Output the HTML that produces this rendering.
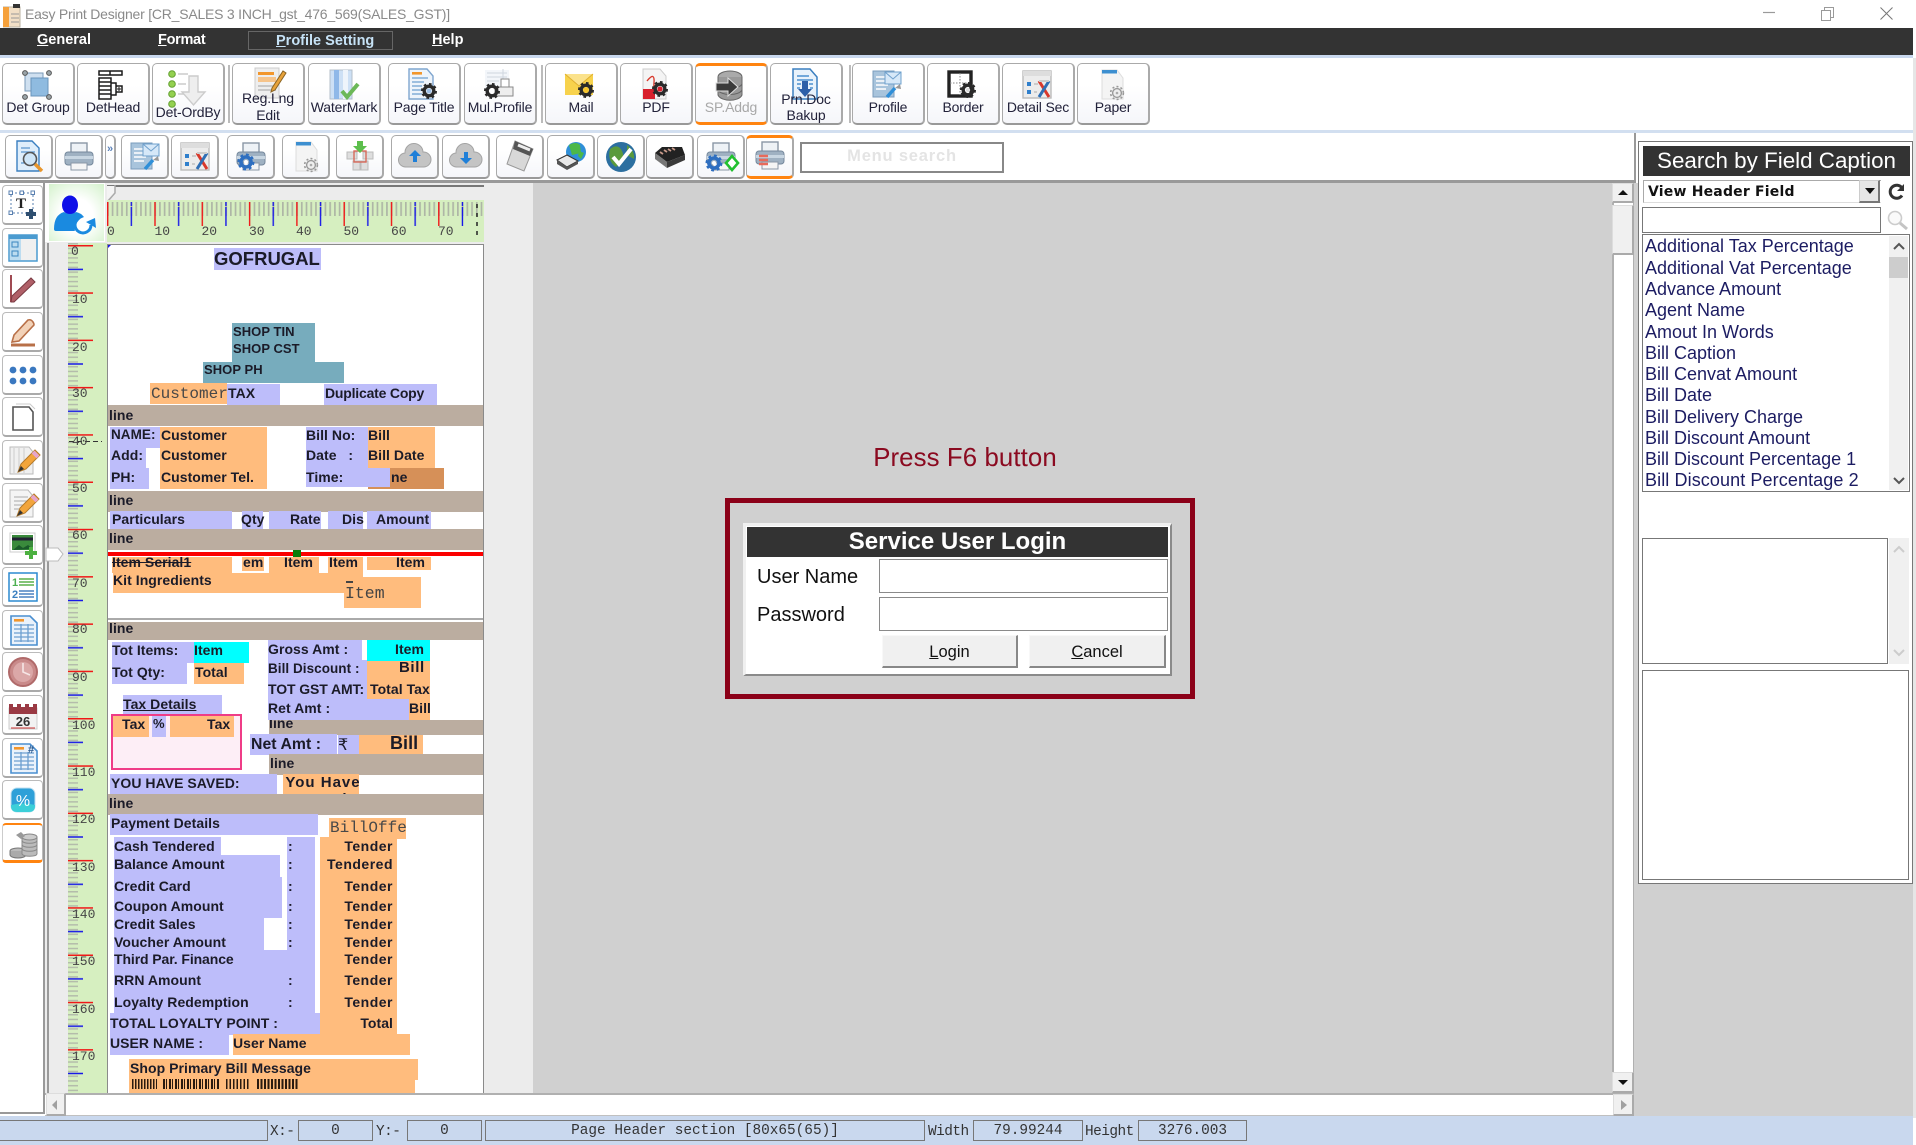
<!DOCTYPE html>
<html><head><meta charset="utf-8"><title>Easy Print Designer</title>
<style>
html,body{margin:0;padding:0;background:#fff}
#r{position:relative;width:1916px;height:1145px;overflow:hidden;background:#fff;font-family:"Liberation Sans",sans-serif;color:#1d1d28;filter:blur(.35px)}
.a{position:absolute;display:block;box-sizing:border-box}
.m{position:absolute;top:31px;color:#fff;font:bold 14.5px/18px "Liberation Sans",sans-serif;white-space:nowrap}
.m u{text-decoration:underline}
.b,.c{position:absolute;box-sizing:border-box;border:1px solid #aaa;border-bottom:2px solid #999;border-right:2px solid #aaa;border-radius:5px;background:linear-gradient(#fff 35%,#f5f6fa)}
.b{top:63px;height:62px;width:73px}
.c{top:135px;height:44px;width:48px}
.or{border-top:3px solid #ff8410;border-bottom:3px solid #ff8410}
.b span{position:absolute;left:-6px;right:-6px;text-align:center;font:14px/16px "Liberation Sans",sans-serif;letter-spacing:-.15px;color:#22223a;top:35px;white-space:nowrap}
.b svg{position:absolute;left:18px;top:5px;overflow:visible}
.c svg{position:absolute;left:7px;top:5px;overflow:visible}
.lb{position:absolute;left:2px;width:41px;height:40px;box-sizing:border-box;border:1px solid #bbb;border-bottom:2px solid #aaa;border-radius:4px;background:#fff}
.lb svg{position:absolute;left:5px;top:4px;overflow:visible}
.l{position:absolute;background:#bdbdfa}
.o{position:absolute;background:#ffbc7d}
.g{position:absolute;background:#bbada0;left:108px;width:375px;height:21px}
.d{position:absolute;font:bold 14px/16px "Liberation Sans",sans-serif;letter-spacing:.05px;white-space:nowrap;color:#1b1b28}
.tn{letter-spacing:.5px}
.mo{position:absolute;font:16px/18px "Liberation Mono",monospace;white-space:nowrap;color:#484848}
.li{position:absolute;left:1645px;font:18px/21px "Liberation Sans",sans-serif;color:#1c1c62;white-space:nowrap}
.st{position:absolute;top:1120px;height:21px;box-sizing:border-box;border:1.5px solid #777;font:14.4px/20px "Liberation Mono",monospace;text-align:center;color:#333;white-space:nowrap}
.sl{position:absolute;top:1122px;font:14.4px/20px "Liberation Mono",monospace;color:#333;white-space:nowrap;letter-spacing:-.5px}
.sb{position:absolute;background:#f0f0f0;box-sizing:border-box;border:1px solid #ddd;border-right:2px solid #aaa;border-bottom:2px solid #aaa}
</style></head><body><div id="r">

<svg width="0" height="0" style="position:absolute">
<defs>
<g id="ge"><circle r="4.8" fill="none" stroke="#2a2a2a" stroke-width="3.4"/><circle r="6.8" fill="none" stroke="#2a2a2a" stroke-width="2.4" stroke-dasharray="2.6 2.7"/></g>
<g id="gel"><circle r="4.4" fill="#eee" stroke="#999" stroke-width="1.4"/><circle r="6.4" fill="none" stroke="#999" stroke-width="1.6" stroke-dasharray="2 2.2"/><circle r="1.3" fill="#aaa"/></g>
<g id="gb"><circle r="5" fill="none" stroke="#2f6fc0" stroke-width="3.6"/><circle r="7.2" fill="none" stroke="#2f6fc0" stroke-width="2.6" stroke-dasharray="2.8 2.8"/></g>
<g id="i-prof"><rect x="2" y="2" width="21" height="26" fill="#a8c4dc" stroke="#7a9cbc"/><path d="M5 8h14M5 12h14M5 16h12M5 20h10" stroke="#fff" stroke-width="1.6"/><rect x="14" y="3" width="16" height="12" fill="#d6e8f8" stroke="#6fa0cc"/><path d="M14 3l8 7 8-7" fill="none" stroke="#6fa0cc"/><path d="M16 28l8-9" stroke="#2f8fd8" stroke-width="3.4"/><path d="M24 19l5-4 1 5z" fill="#999"/></g>
<g id="i-det"><rect x="2" y="2" width="28" height="27" fill="#ececec" stroke="#bbb" stroke-width="1.4"/><rect x="2" y="2" width="28" height="5" fill="#ddd"/><rect x="6" y="13" width="4" height="4" fill="#2f7fcc"/><rect x="6" y="21" width="4" height="4" fill="#2f7fcc"/><path d="M13 15h4M13 23h3" stroke="#aaa"/><path d="M18 12l10 16" stroke="#d8392c" stroke-width="3"/><path d="M28 12l-10 16" stroke="#2f6fb5" stroke-width="3"/><path d="M18 12h10" stroke="#ccc" stroke-width="2"/></g>
<g id="i-pap"><path d="M6 1h15l6 8v21H6z" fill="#f4f4f4" stroke="#ddd"/><rect x="6" y="1" width="15" height="3.5" fill="#3d8fd0"/><use href="#gel" x="21" y="24"/></g>
<g id="i-prn"><rect x="8" y="2" width="16" height="10" fill="#eef2f6" stroke="#8a97a6" stroke-width="1.4"/><rect x="2" y="11" width="28" height="13" rx="3" fill="#9fb1c2" stroke="#75889c"/><rect x="2" y="15" width="28" height="3" fill="#c8d6e2"/><rect x="8" y="22" width="16" height="7" fill="#f5f5f5" stroke="#8a97a6"/></g>
<g id="i-pen"><path d="M7 25l3-8 14-14 5 5-14 14z" fill="#f2a53c" stroke="#b57a2a"/><path d="M22 5l5 5" stroke="#e5a5cc" stroke-width="4"/><path d="M7 25l3-6 3 3z" fill="#333"/></g>
<g id="i-tbl"><path d="M3 1h19l7 7v22H3z" fill="#eaf2fb" stroke="#4a8fd0" stroke-width="1.6"/><rect x="6" y="4" width="10" height="2.6" fill="#f2962c"/><path d="M6 10h20M6 14h20M6 18h20M6 22h20M6 26h20M13 9v18M20 9v18" stroke="#6d9fd0" stroke-width="1.3"/></g>
</defs></svg>

<!-- title bar -->
<svg class="a" style="left:3px;top:4px" width="18" height="24" viewBox="0 0 18 24"><rect x="0" y="3" width="17" height="20" fill="#f2dfc5" stroke="#b8b0a0"/><rect x="0" y="3" width="6" height="20" fill="#f6a13b"/><rect x="10" y="0" width="7" height="4" fill="#333"/><path d="M8 10h8M8 14h8M8 18h8" stroke="#999"/></svg>
<div class="a" style="left:25px;top:5px;font:14px/19px 'Liberation Sans',sans-serif;color:#8a8a8a;white-space:nowrap;letter-spacing:-.22px">Easy Print Designer [CR_SALES 3 INCH_gst_476_569(SALES_GST)]</div>
<svg class="a" style="left:1760px;top:4px" width="140" height="22"><path d="M3 8.5h12" stroke="#9a9a9a" stroke-width="1.2"/><path d="M61.500 6.500h9v10h-9zM64.500 6.500v-3h9v10h-3" fill="none" stroke="#9a9a9a"/><path d="M120.500 3.500l12 12M132.500 3.500l-12 12" stroke="#777"/></svg>

<!-- menu -->
<div class="a" style="left:0;top:28px;width:1913px;height:27px;background:#333"></div>
<div class="a" style="left:0;top:55px;width:1913px;height:3px;background:#c9d8ee"></div>
<div class="a" style="left:248px;top:31px;width:145px;height:19px;border:1.5px solid #666"></div>
<div class="m" style="left:37px"><u>G</u>eneral</div>
<div class="m" style="left:158px;letter-spacing:-.3px"><u>F</u>ormat</div>
<div class="m" style="left:276px;top:32px;color:#c6e2f6"><u>P</u>rofile Setting</div>
<div class="m" style="left:432px"><u>H</u>elp</div>
<div class="a" style="left:1913px;top:58px;width:3px;height:1060px;background:#e6e6e6"></div>

<!-- toolbar 1 -->
<div class="b" style="left:2px"><svg width="32" height="32" viewBox="0 0 32 32"><rect x="4" y="4" width="18" height="18" fill="#cfe0f0" stroke="#7a9ab8"/><rect x="10" y="9" width="17" height="18" fill="#8fbbe0" stroke="#6a94bb"/><g fill="#9aa4a8" stroke="#555"><circle cx="4" cy="4" r="2.4"/><circle cx="28" cy="4" r="2.4"/><circle cx="4" cy="28" r="2.4"/><circle cx="28" cy="28" r="2.4"/></g></svg><span>Det Group</span></div>
<div class="b" style="left:77px"><svg width="32" height="32" viewBox="0 0 32 32" fill="none" stroke="#1a1a1a" stroke-width="1.5"><path d="M3 2h23v4H3zM14 2v4M3 9h12v21H3zM3 13h12M3 17h12M3 21h12M3 25h12M15 14h5v12h-5M20 17h6v6h-6z"/><path d="M21 20h4M23 18v4" stroke-width="1"/></svg><span>DetHead</span></div>
<div class="b" style="left:152px"><svg style="left:15px;top:6px" width="40" height="38" viewBox="0 0 40 38"><g fill="#93d050" stroke="#63a030"><circle cx="4" cy="4" r="3.3"/><circle cx="4" cy="14" r="3.3"/><circle cx="4" cy="24" r="3.3"/><circle cx="4" cy="34" r="3.3"/></g><path d="M10 4h10M10 14h8M10 24h6" stroke="#ccc" stroke-width="1.5"/><path d="M21 6h9v16h7L25.500 35 14 22h7z" fill="#eee" stroke="#ccc" stroke-width="1.4"/></svg><span style="top:40px">Det-OrdBy</span></div>
<div class="a" style="left:228px;top:65px;width:2px;height:58px;background:#bbb"></div>
<div class="b" style="left:232px"><svg style="left:20px;top:3px" width="34" height="32" viewBox="0 0 34 32"><rect x="2" y="1" width="24" height="30" fill="#eee" stroke="#ccc"/><rect x="5" y="5" width="16" height="3" fill="#f2962c"/><rect x="5" y="10" width="18" height="5" fill="#f6c48b"/><path d="M5 19h18M5 23h18" stroke="#bbb" stroke-width="1.5"/><path d="M19 21L30 4l3 2-11 17-4 2z" fill="#e8a23a" stroke="#8a6424"/></svg><span style="top:26px">Reg.Lng</span><span style="top:43px">Edit</span></div>
<div class="b" style="left:308px"><svg width="32" height="32" viewBox="0 0 32 32"><rect x="3" y="1" width="22" height="29" fill="#cde0f5" stroke="#b4bfca"/><rect x="7" y="1" width="5" height="29" fill="#8fb8e8"/><rect x="16" y="1" width="5" height="29" fill="#eef4fb"/><path d="M15 22l5 6 11-13" fill="none" stroke="#6cb858" stroke-width="4"/></svg><span>WaterMark</span></div>
<div class="b" style="left:388px"><svg width="32" height="32" viewBox="0 0 32 32"><path d="M2 0h18l6 7v23H2z" fill="#eef4fb" stroke="#7fa6cf" stroke-width="1.4"/><rect x="5" y="3" width="10" height="2.600" fill="#f2962c"/><path d="M5 9h16M5 13h12M5 17h10M5 21h10M5 25h10" stroke="#6d9fd0" stroke-width="1.3"/><use href="#ge" x="22" y="22"/><circle cx="22" cy="22" r="2.500" fill="#9fc0e6"/></svg><span>Page Title</span></div>
<div class="b" style="left:464px"><svg width="32" height="32" viewBox="0 0 32 32"><path d="M2 1h24v18H2z" fill="#f3f6fa"/><path d="M4 4h20M4 8h20M4 12h12M4 16h8M20 0v18" stroke="#cfd6df"/><rect x="12" y="18" width="18" height="9" fill="#eee" stroke="#888"/><rect x="18" y="10" width="8" height="8" fill="#fff" stroke="#888"/><use href="#ge" x="9" y="22"/><circle cx="9" cy="22" r="2" fill="#fff"/></svg><span>Mul.Profile</span></div>
<div class="a" style="left:541px;top:65px;width:2px;height:58px;background:#bbb"></div>
<div class="b" style="left:545px"><svg width="32" height="32" viewBox="0 0 32 32"><rect x="1" y="5" width="28" height="21" fill="#f7d24c"/><path d="M1 5l14 12L29 5" fill="#fbe28b" stroke="#e0b030"/><use href="#ge" x="22" y="21"/><circle cx="22" cy="21" r="2.600" fill="#f7c52c"/></svg><span>Mail</span></div>
<div class="b" style="left:620px"><svg width="32" height="32" viewBox="0 0 32 32"><path d="M4 0h17l6 7v23H4z" fill="#f4f4f4" stroke="#ccc"/><path d="M8 12q8-10 7 2t7 6" fill="none" stroke="#d8392c" stroke-width="1.4"/><rect x="4" y="20" width="12" height="10" fill="#d8202c"/><use href="#ge" x="21" y="20"/><circle cx="21" cy="20" r="2.600" fill="#d8202c"/></svg><span>PDF</span></div>
<div class="b or" style="left:695px"><svg style="top:3px" width="32" height="32" viewBox="0 0 32 32"><ellipse cx="16" cy="8" rx="12" ry="6" fill="#aaa" stroke="#666"/><path d="M4 8v18c3 7 21 7 24 0V8" fill="#999" stroke="#666"/><path d="M4 15c3 6 21 6 24 0M4 21c3 6 21 6 24 0" fill="none" stroke="#666"/><path d="M2 14h12V9l10 9-10 9v-5H2z" fill="#3a3a3a" stroke="#ddd"/></svg><span style="top:33px;color:#a8a8a8">SP.Addg</span></div>
<div class="b" style="left:770px"><svg width="32" height="32" viewBox="0 0 32 32"><path d="M4 0h17l7 8v22H4z" fill="#e8f2fb" stroke="#3a7fc0" stroke-width="1.5"/><path d="M8 7h12M8 11h16M8 15h4M20 15h4M8 19h3M21 19h3" stroke="#4a8fd0" stroke-width="1.400"/><path d="M13 12h6v8h4l-7 8-7-8h4z" fill="#2c5fa8"/></svg><span style="top:27px">Prn.Doc</span><span style="top:43px">Bakup</span></div>
<div class="a" style="left:849px;top:65px;width:2px;height:58px;background:#bbb"></div>
<div class="b" style="left:852px"><svg width="32" height="32" viewBox="0 0 32 32"><use href="#i-prof"/></svg><span>Profile</span></div>
<div class="b" style="left:927px"><svg width="32" height="32" viewBox="0 0 32 32"><rect x="3" y="3" width="22" height="24" fill="#fff" stroke="#222" stroke-width="3.400"/><path d="M14 4v22M4 14h20" stroke="#888" stroke-dasharray="1.500 1.500"/><use href="#ge" x="22" y="21"/><circle cx="22" cy="21" r="2.200" fill="#ddd"/></svg><span>Border</span></div>
<div class="b" style="left:1002px"><svg width="32" height="32" viewBox="0 0 32 32"><use href="#i-det"/></svg><span>Detail Sec</span></div>
<div class="b" style="left:1077px"><svg width="32" height="32" viewBox="0 0 32 32"><use href="#i-pap"/></svg><span>Paper</span></div>
<div class="a" style="left:0;top:130px;width:1913px;height:3px;background:#d2dff0"></div>

<!-- toolbar 2 -->
<div class="a" style="left:0;top:133px;width:1636px;height:48px;background:#fff;border-right:2px solid #999"></div>
<div class="c" style="left:5px"><svg width="32" height="32" viewBox="0 0 32 32"><path d="M4 0h15l7 7v23H4z" fill="#dfeefb" stroke="#3a7fc0" stroke-width="1.400"/><path d="M8 7h9M8 11h14M8 22h6" stroke="#3a7fc0"/><circle cx="17" cy="18" r="6.500" fill="#cfe6f8" stroke="#555" stroke-width="1.600"/><path d="M22 23l7 7" stroke="#e8962c" stroke-width="3.400"/></svg></div>
<div class="c" style="left:55px"><svg width="32" height="32" viewBox="0 0 32 32"><use href="#i-prn"/></svg></div>
<div class="c" style="left:105px;width:11px"><span style="position:absolute;left:1px;top:7px;font:bold 11px/12px 'Liberation Sans',sans-serif;color:#5a80b8">»</span></div>
<div class="c" style="left:121px"><svg width="32" height="32" viewBox="0 0 32 32"><use href="#i-prof"/></svg></div>
<div class="c" style="left:171px"><svg width="32" height="32" viewBox="0 0 32 32"><use href="#i-det"/></svg></div>
<div class="c" style="left:227px"><svg width="32" height="32" viewBox="0 0 32 32"><use href="#i-prn"/><use href="#gb" x="11" y="21"/><circle cx="11" cy="21" r="2" fill="#fff"/></svg></div>
<div class="c" style="left:282px"><svg width="32" height="32" viewBox="0 0 32 32"><use href="#i-pap"/></svg></div>
<div class="c" style="left:336px"><svg width="32" height="32" viewBox="0 0 32 32"><path d="M3 11h10v7H3zM19 11h10v7H19zM9 20h7v9H9zM17 20h7v9H17z" fill="#dedede" stroke="#bbb"/><rect x="10" y="10" width="12" height="11" fill="none" stroke="#d86a5a" stroke-width="1.400"/><path d="M13 0h6v5h4l-7 7-7-7h4z" fill="#5cbf4c"/></svg></div>
<div class="c" style="left:391px"><svg width="32" height="32" viewBox="0 0 32 32"><path d="M7 26a7 7 0 0 1-1-14 9 9 0 0 1 18-1 7.500 7.500 0 0 1 1 15z" fill="#c4c4c4" stroke="#a4a4a4"/><path d="M16 9l6 6h-4v6h-4v-6h-4z" fill="#1f7fd8"/></svg></div>
<div class="c" style="left:442px"><svg width="32" height="32" viewBox="0 0 32 32"><path d="M7 26a7 7 0 0 1-1-14 9 9 0 0 1 18-1 7.500 7.500 0 0 1 1 15z" fill="#c4c4c4" stroke="#a4a4a4"/><path d="M16 23l6-6h-4v-6h-4v6h-4z" fill="#1f7fd8"/></svg></div>
<div class="c" style="left:496px"><svg width="32" height="32" viewBox="0 0 32 32"><path d="M11 0l18 8-9 22-17-7z" fill="#d8d8d8" stroke="#999"/><path d="M11 0l18 8-3 7-17-7z" fill="#555"/><path d="M14 4l12 5" stroke="#eee" stroke-width="3"/></svg></div>
<div class="c" style="left:547px"><svg width="32" height="32" viewBox="0 0 32 32"><circle cx="21" cy="11" r="10" fill="#2f8fd8"/><path d="M14 4q7-4 11 0l1 8-9 2z" fill="#4cb848"/><path d="M24 10l5 2-3 6-3-3z" fill="#4cb848"/><path d="M2 19l10-5 11 6-11 6z" fill="#e8e8e8" stroke="#333"/><path d="M2 19v4l10 6 11-6v-3l-11 6z" fill="#555"/></svg></div>
<div class="c" style="left:597px"><svg width="32" height="32" viewBox="0 0 32 32"><circle cx="16" cy="16" r="15" fill="#2c6fa0"/><path d="M5 8q8-6 12 2t-6 16Q2 20 5 8zM22 4q8 6 7 14l-7-4z" fill="#5a9a3c"/><path d="M8 16l6 7L26 8" fill="none" stroke="#fff" stroke-width="4"/></svg></div>
<div class="c" style="left:646px"><svg width="32" height="32" viewBox="0 0 32 32"><path d="M8 6h20l3 8-18 7L1 12z" fill="#222"/><path d="M1 12l12 9v6L1 18z" fill="#777"/><path d="M13 21l18-7v5l-18 8z" fill="#3a3a3a"/><path d="M6 11l3 2M10 9l3 2M14 8l3 2M18 7l3 2" stroke="#c89a8a" stroke-width="1.800"/></svg></div>
<div class="c" style="left:697px"><svg width="32" height="32" viewBox="0 0 32 32"><use href="#i-prn"/><use href="#gb" x="9" y="22"/><circle cx="9" cy="22" r="2" fill="#fff"/><path d="M27 15l6 7-6 7-6-7z" fill="#fff" stroke="#22c030" stroke-width="2.600"/></svg></div>
<div class="c or" style="left:746px"><svg style="top:2px" width="32" height="32" viewBox="0 0 32 32"><use href="#i-prn"/><path d="M5 16h9M5 20h9M5 24h9" stroke="#e86a5a" stroke-width="2.600"/></svg></div>
<div class="a" style="left:800px;top:142px;width:204px;height:31px;border:2px solid #888;border-bottom-color:#888;background:#fff;text-align:center;font:bold 16.500px/25px 'Liberation Sans',sans-serif;color:#e4e4e4;letter-spacing:.8px">Menu search</div>
<div class="a" style="left:0;top:180px;width:1636px;height:3px;background:#999"></div>

<!-- gray workspace -->
<div class="a" style="left:1634px;top:183px;width:279px;height:934px;background:#d0d0d0"></div>
<div class="a" style="left:533px;top:183px;width:1080px;height:910px;background:#d0d0d0"></div>
<div class="a" style="left:484px;top:183px;width:49px;height:910px;background:#ececec"></div>
<div class="a" style="left:45px;top:183px;width:439px;height:62px;background:#ececec"></div>
<div class="a" style="left:45px;top:243px;width:23px;height:850px;background:#ececec"></div>
<div class="a" style="left:47px;top:243px;width:2px;height:850px;background:#9a9a9a"></div>
<svg class="a" style="left:45px;top:546px" width="20" height="18"><path d="M1 2h12l5 6-5 7H1z" fill="#fff" stroke="#bbb"/></svg>

<!-- right of workspace scrollbar -->
<div class="a" style="left:1612px;top:183px;width:22px;height:910px;background:#fff;border-left:2px solid #b0b0b0;border-right:1px solid #b0b0b0"></div>
<div class="sb" style="left:1612px;top:183px;width:22px;height:20px"></div>
<svg class="a" style="left:1616px;top:189px" width="14" height="8"><path d="M7 1l5 5H2z" fill="#111"/></svg>
<div class="sb" style="left:1612px;top:205px;width:22px;height:50px"></div>
<div class="sb" style="left:1612px;top:1072px;width:22px;height:21px"></div>
<svg class="a" style="left:1616px;top:1078px" width="14" height="8"><path d="M7 7l5-5H2z" fill="#111"/></svg>

<!-- horizontal scrollbar -->
<div class="a" style="left:45px;top:1093px;width:1589px;height:24px;background:#fff;border-top:2px solid #b0b0b0;border-bottom:2px solid #c0c0c0"></div>
<div class="sb" style="left:46px;top:1093px;width:20px;height:23px"></div>
<svg class="a" style="left:50px;top:1099px" width="10" height="12"><path d="M7 1v10L2 6z" fill="#a0a0a0"/></svg>
<div class="sb" style="left:1613px;top:1094px;width:21px;height:22px"></div>
<svg class="a" style="left:1619px;top:1099px" width="10" height="12"><path d="M2 1v10l6-5z" fill="#a0a0a0"/></svg>

<!-- left toolbar -->
<div class="a" style="left:0;top:183px;width:45px;height:931px;background:#fff;border-right:2px solid #999;border-bottom:2px solid #999"></div>
<div class="lb" style="top:185px;height:40px"><svg width="30" height="30" viewBox="0 0 30 30"><rect x="3" y="3" width="22" height="20" fill="none" stroke="#5a80b0" stroke-dasharray="2 2"/><g fill="#fff" stroke="#5a80b0"><rect x="1" y="1" width="3.500" height="3.500"/><rect x="23" y="1" width="3.500" height="3.500"/><rect x="1" y="21" width="3.500" height="3.500"/><rect x="12" y="1" width="3.500" height="3.500"/></g><text x="8" y="18" font-family="Liberation Serif,serif" font-weight="bold" font-size="15" fill="#222">T</text><path d="M23 19v10M18 24h10" stroke="#2f4f70" stroke-width="4"/></svg></div>
<div class="lb" style="top:228px"><svg width="30" height="30" viewBox="0 0 30 30"><rect x="1" y="2" width="28" height="26" fill="#f0f0f0" stroke="#4a9bd0" stroke-width="1.500"/><rect x="1" y="2" width="28" height="4" fill="#4a9bd0"/><rect x="2" y="6" width="11" height="21" fill="#bcdcf0"/><rect x="4" y="9" width="6" height="5" fill="none" stroke="#3a86c0"/><rect x="4" y="18" width="6" height="5" fill="none" stroke="#3a86c0"/></svg></div>
<div class="lb" style="top:269px"><svg width="30" height="30" viewBox="0 0 30 30"><path d="M3 1v27" stroke="#a04a52" stroke-width="2"/><path d="M3 28h3L27 8l-4-4L4 22z" fill="#b06068" stroke="#7a3a42"/></svg></div>
<div class="lb" style="top:312px"><svg width="30" height="30" viewBox="0 0 30 30"><path d="M3 28h24" stroke="#b87048" stroke-width="3"/><path d="M4 25l2-7L20 3q3-1 5 2t0 4L11 24z" fill="#f2d2b8" stroke="#b87048" stroke-width="1.600"/></svg></div>
<div class="lb" style="top:355px"><svg width="30" height="30" viewBox="0 0 30 30" fill="#3a78c0"><circle cx="5" cy="10" r="3.400"/><circle cx="15" cy="10" r="3.400"/><circle cx="25" cy="10" r="3.400"/><circle cx="5" cy="21" r="3.400"/><circle cx="15" cy="21" r="3.400"/><circle cx="25" cy="21" r="3.400"/></svg></div>
<div class="lb" style="top:397px"><svg width="30" height="30" viewBox="0 0 30 30"><path d="M5 5h16l4 5v18H5z" fill="#fff" stroke="#555" stroke-width="1.600"/><path d="M8 2h14l5 5" fill="none" stroke="#ccc"/></svg></div>
<div class="lb" style="top:440px"><svg width="30" height="30" viewBox="0 0 30 30"><path d="M2 2h19l4 5v22H2z" fill="#f0f0f0" stroke="#bbb"/><path d="M6 3v25M11 3v25M16 3v25" stroke="#ccc"/><use href="#i-pen" x="3" y="2"/></svg></div>
<div class="lb" style="top:483px"><svg width="30" height="30" viewBox="0 0 30 30"><path d="M2 2h18l5 6v21H2z" fill="#f4f4f4" stroke="#bbb"/><path d="M6 9h14M6 13h14M6 17h10M6 21h8" stroke="#aaa"/><use href="#i-pen" x="2" y="3"/></svg></div>
<div class="lb" style="top:525px"><svg width="30" height="30" viewBox="0 0 30 30"><rect x="2" y="3" width="25" height="19" fill="#fff" stroke="#ccc"/><rect x="4" y="5" width="21" height="15" fill="#3a8a3c"/><path d="M4 9h21" stroke="#223" stroke-width="3"/><path d="M5 20l6-5 4 3 5-3 5 4" fill="#1a5a2a"/><path d="M23 17v12M17 23h12" stroke="#4cb040" stroke-width="4"/></svg></div>
<div class="lb" style="top:567px"><svg width="30" height="30" viewBox="0 0 30 30"><rect x="1" y="1" width="28" height="28" fill="#fff" stroke="#2c8ad0" stroke-width="1.500"/><text x="4" y="14" font-family="Liberation Sans,sans-serif" font-size="11" font-weight="bold" fill="#4caf50">1</text><text x="4" y="26" font-family="Liberation Sans,sans-serif" font-size="11" font-weight="bold" fill="#3a7fc0">2</text><path d="M11 7h15M11 10h15M11 13h15" stroke="#5ab04a" stroke-width="1.500"/><path d="M11 19h15M11 22h15M11 25h15" stroke="#4a80c0" stroke-width="1.500"/></svg></div>
<div class="lb" style="top:610px"><svg width="30" height="30" viewBox="0 0 30 30"><use href="#i-tbl"/></svg></div>
<div class="lb" style="top:652px"><svg width="30" height="30" viewBox="0 0 30 30"><circle cx="15" cy="15" r="14" fill="#c98a8a" stroke="#b06a6a" stroke-width="2"/><circle cx="15" cy="15" r="10" fill="#dba8a8"/><path d="M15 6v9l7 3" fill="none" stroke="#f6e6e6" stroke-width="1.600"/></svg></div>
<div class="lb" style="top:695px"><svg width="30" height="30" viewBox="0 0 30 30"><rect x="1" y="8" width="28" height="21" fill="#f2f2f2" stroke="#ccc"/><path d="M1 14V4h4v3h4V4h4v3h4V4h4v3h4V4h4v10z" fill="#9a3a44"/><text x="15" y="26" text-anchor="middle" font-family="Liberation Sans,sans-serif" font-size="13" font-weight="bold" fill="#333">26</text><path d="M3 28h24" stroke="#c33" stroke-width="1"/></svg></div>
<div class="lb" style="top:738px"><svg width="30" height="30" viewBox="0 0 30 30"><use href="#i-tbl"/><text x="20" y="10" font-family="Liberation Sans,sans-serif" font-size="11" font-weight="bold" fill="#2c5a90">#</text></svg></div>
<div class="lb" style="top:780px"><svg width="30" height="30" viewBox="0 0 30 30"><rect x="3" y="3" width="24" height="24" rx="6" fill="#2ea0d8" stroke="#c0dff0"/><path d="M3 20q12-3 24 0v1q0 6-6 6H9q-6 0-6-6z" fill="#3ccfd8"/><text x="15" y="21" text-anchor="middle" font-family="Liberation Sans,sans-serif" font-size="16" fill="#fff">%</text></svg></div>
<div class="lb" style="top:823px;border-bottom:3px solid #ff8410;border-top:2px solid #ff8410;border-left-color:#ccc"><svg width="30" height="30" viewBox="0 0 30 30"><ellipse cx="10" cy="22" rx="8" ry="3" fill="#bbb" stroke="#777"/><path d="M2 22v4c1 4 15 4 16 0v-4" fill="#aaa" stroke="#777"/><path d="M14 8v17c2 3 14 3 15 0V8z" fill="#bbb" stroke="#888"/><path d="M14 12c2 3 13 3 15 0M14 16c2 3 13 3 15 0M14 20c2 3 13 3 15 0" fill="none" stroke="#888"/><ellipse cx="21.500" cy="8" rx="7.500" ry="3" fill="#ccc" stroke="#888"/><path d="M8 6l5-3 4 4-4 3z" fill="#999"/></svg></div>

<!-- user icon box -->
<div class="a" style="left:45px;top:183px;width:60px;height:59px;background:#fff"></div>
<div class="a" style="left:49px;top:184px;width:55px;height:57px;background:radial-gradient(circle at 50% 55%,#fff 40%,#d4f2cc)"></div>
<svg class="a" style="left:45px;top:183px;overflow:visible" width="60" height="59" viewBox="0 0 60 59"><ellipse cx="25" cy="22" rx="8" ry="9.500" fill="#0f10e8"/><path d="M9 46q0-14 10-17q6 4 12 0q5 1 8 5q-6 2-8 8t-1 6H11q-2 0-2-2z" fill="#1a8ae0"/><path d="M34 35A8 8 0 1 0 46 42" fill="none" stroke="#1a8ae0" stroke-width="3"/><path d="M41 39l9-4 1 10z" fill="#1a8ae0"/></svg>

<!-- rulers -->
<div class="a" style="left:107px;top:185px;width:377px;height:2px;background:#777"></div>
<svg class="a" style="left:107px;top:183px;overflow:visible" width="377" height="60">
<defs>
<pattern id="pg" width="4.73" height="14" patternUnits="userSpaceOnUse"><rect width="1.700" height="14" fill="#aeb6a6"/></pattern>
<pattern id="pc" width="47.300" height="24" patternUnits="userSpaceOnUse"><rect width="1.400" height="24" fill="#f01818"/><rect x="23.650" width="1.400" height="23" fill="#1818e8"/></pattern>
</defs>
<path d="M0 17l8-8V3H0z" fill="#f4f4f4"/><path d="M8 2v8l-7 8" fill="none" stroke="#aaa" stroke-width="1.500"/>
<rect y="17" width="377" height="42" fill="#d6efc0"/>
<rect y="19" width="377" height="14" fill="url(#pg)"/>
<rect y="19" width="377" height="24" fill="url(#pc)"/>
<path d="M370 21v36" stroke="#222" stroke-width="1.500" stroke-dasharray="4 5"/>
<g font-family="Liberation Mono,monospace" font-size="13" fill="#454545">
<text x="0" y="52">0</text><text x="47.500" y="52">10</text><text x="94.500" y="52">20</text><text x="142" y="52">30</text><text x="189" y="52">40</text><text x="236.500" y="52">50</text><text x="284" y="52">60</text><text x="331" y="52">70</text></g>
</svg>
<svg class="a" style="left:68px;top:243px" width="39" height="850">
<defs>
<pattern id="pgv" width="12" height="4.730" patternUnits="userSpaceOnUse" y="0"><rect width="10" height="1.500" fill="#b4bcab"/></pattern>
<pattern id="pcv" width="26" height="47.300" patternUnits="userSpaceOnUse" y="2"><rect width="25" height="1.500" fill="#f01818"/><rect y="23.650" width="15" height="1.500" fill="#1818e8"/></pattern>
</defs>
<rect width="39" height="850" fill="#d6efc0"/>
<rect width="10" height="850" fill="url(#pgv)"/>
<rect width="26" height="850" fill="url(#pcv)"/>
<path d="M1 198.500h33" stroke="#333" stroke-dasharray="5 3"/>
<g font-family="Liberation Mono,monospace" font-size="13" fill="#454545">
<text x="3" y="12">0</text><text x="4" y="60">10</text><text x="4" y="108">20</text><text x="4" y="154">30</text><text x="4" y="202">40</text><text x="4" y="249">50</text><text x="4" y="296">60</text><text x="4" y="344">70</text><text x="4" y="390">80</text><text x="4" y="438">90</text><text x="4" y="486">100</text><text x="4" y="533">110</text><text x="4" y="580">120</text><text x="4" y="628">130</text><text x="4" y="675">140</text><text x="4" y="722">150</text><text x="4" y="770">160</text><text x="4" y="817">170</text></g>
</svg>

<!-- page -->
<div class="a" style="left:107px;top:244px;width:377px;height:849px;background:#fff;border:1.500px solid #8a8a8a;border-bottom:0"></div>
<svg class="a" style="left:108px;top:245px" width="4" height="4"><path d="M0 0h3L0 3z" fill="#1818e8"/></svg>

<div class="l" style="left:214px;top:248px;width:107px;height:22px"></div>
<div class="d" style="left:214px;top:248px;font-size:18.500px;line-height:22px;letter-spacing:0">GOFRUGAL</div>
<div class="a" style="left:232px;top:323px;width:83px;height:39px;background:#77acbd"></div>
<div class="a" style="left:203px;top:362px;width:141px;height:21px;background:#77acbd"></div>
<div class="d" style="left:233px;top:324px;font-size:13px">SHOP TIN</div>
<div class="d" style="left:233px;top:341px;font-size:13px">SHOP CST</div>
<div class="d" style="left:204px;top:362px;font-size:13px">SHOP PH</div>
<div class="o" style="left:150px;top:383px;width:77px;height:21px"></div>
<div class="mo" style="left:151px;top:385px">Customer</div>
<div class="l" style="left:227px;top:384px;width:53px;height:21px"></div>
<div class="d" style="left:228px;top:385px">TAX</div>
<div class="l" style="left:324px;top:384px;width:113px;height:21px"></div>
<div class="d" style="left:325px;top:385px;letter-spacing:-.2px">Duplicate Copy</div>

<div class="g" style="top:405px"></div><div class="d" style="left:109px;top:407px">line</div>
<div class="l" style="left:110px;top:427px;width:51px;height:21px"></div>
<div class="l" style="left:110px;top:448px;width:36px;height:20px"></div>
<div class="l" style="left:110px;top:468px;width:39px;height:21px"></div>
<div class="o" style="left:160px;top:427px;width:107px;height:62px"></div>
<div class="d" style="left:111px;top:427px;font-size:13.500px">NAME:</div><div class="d" style="left:111px;top:447px">Add:</div><div class="d" style="left:111px;top:469px">PH:</div>
<div class="d" style="left:161px;top:427px">Customer</div><div class="d" style="left:161px;top:447px">Customer</div><div class="d" style="left:161px;top:469px">Customer Tel.</div>
<div class="l" style="left:306px;top:427px;width:62px;height:41px"></div>
<div class="o" style="left:368px;top:427px;width:67px;height:41px"></div>
<div class="a" style="left:368px;top:468px;width:76px;height:21px;background:#d69058"></div>
<div class="l" style="left:306px;top:468px;width:84px;height:19px"></div>
<div class="d" style="left:306px;top:427px">Bill No:</div><div class="d" style="left:306px;top:447px;white-space:pre">Date   :</div><div class="d" style="left:306px;top:469px">Time:</div>
<div class="d" style="left:368px;top:427px">Bill</div><div class="d" style="left:368px;top:447px">Bill Date</div><div class="d" style="left:391px;top:469px">ne</div>

<div class="g" style="top:491px"></div><div class="d" style="left:109px;top:492px">line</div>
<div class="l" style="left:110px;top:511px;width:122px;height:18px"></div>
<div class="l" style="left:242px;top:511px;width:21px;height:18px"></div>
<div class="l" style="left:269px;top:511px;width:52px;height:18px"></div>
<div class="l" style="left:328px;top:511px;width:35px;height:18px"></div>
<div class="l" style="left:367px;top:511px;width:64px;height:18px"></div>
<div class="d" style="left:112px;top:511px">Particulars</div><div class="d" style="left:241px;top:511px">Qty</div><div class="d" style="left:290px;top:511px">Rate</div><div class="d" style="left:342px;top:511px">Dis</div><div class="d" style="left:376px;top:511px">Amount</div>
<div class="g" style="top:529px"></div><div class="d" style="left:109px;top:530px">line</div>
<div class="a" style="left:108px;top:552px;width:375px;height:4px;background:#fb0000"></div>
<div class="a" style="left:293px;top:550px;width:8px;height:7px;background:#0a7d0a"></div>

<div class="o" style="left:112px;top:557px;width:120px;height:16px"></div>
<div class="o" style="left:242px;top:557px;width:22px;height:14px"></div>
<div class="o" style="left:269px;top:557px;width:50px;height:16px"></div>
<div class="o" style="left:328px;top:557px;width:35px;height:16px"></div>
<div class="o" style="left:367px;top:557px;width:64px;height:13px"></div>
<div class="o" style="left:113px;top:573px;width:250px;height:20px"></div>
<div style="position:absolute;left:112px;top:553px;width:82px;height:20px;overflow:hidden"><div class="d" style="left:0;top:1px;text-decoration:line-through">Item Serial1</div></div>
<div class="d" style="left:243px;top:554px">em</div><div class="d" style="left:284px;top:554px">Item</div><div class="d" style="left:329px;top:554px">Item</div><div class="d" style="left:396px;top:554px">Item</div>
<div class="d" style="left:113px;top:572px">Kit Ingredients</div>
<div class="o" style="left:344px;top:577px;width:77px;height:31px"></div>
<div class="mo" style="left:345px;top:585px;font-size:16.500px;color:#444">Item</div>
<div class="a" style="left:346px;top:581px;width:7px;height:1.500px;background:#444"></div>
<div class="a" style="left:108px;top:618px;width:375px;height:1.500px;background:#aaa"></div>
<div class="g" style="top:622px;height:18px"></div><div class="d" style="left:109px;top:620px">line</div>

<div class="l" style="left:112px;top:642px;width:82px;height:21px"></div>
<div class="l" style="left:112px;top:663px;width:75px;height:21px"></div>
<div class="a" style="left:194px;top:642px;width:55px;height:21px;background:#00ffff"></div>
<div class="o" style="left:194px;top:663px;width:50px;height:21px"></div>
<div class="d" style="left:112px;top:642px">Tot Items:</div><div class="d" style="left:112px;top:664px">Tot Qty:</div><div class="d" style="left:194px;top:642px">Item</div><div class="d" style="left:195px;top:664px">Total</div>
<div class="l" style="left:268px;top:640px;width:94px;height:20px"></div>
<div class="l" style="left:268px;top:660px;width:99px;height:39px"></div>
<div class="a" style="left:367px;top:640px;width:63px;height:21px;background:#00ffff"></div>
<div class="o" style="left:367px;top:661px;width:63px;height:38px"></div>
<div class="o" style="left:409px;top:699px;width:21px;height:21px"></div>
<div class="l" style="left:268px;top:699px;width:141px;height:21px"></div>
<div class="d" style="left:268px;top:641px">Gross Amt :</div><div class="d" style="left:268px;top:661px;font-size:13.500px">Bill Discount :</div><div class="d" style="left:268px;top:681px;letter-spacing:-.1px">TOT GST AMT:</div><div class="d" style="left:268px;top:700px">Ret Amt :</div>
<div class="d" style="left:395px;top:641px">Item</div><div class="d" style="left:399px;top:660px;font-size:15px;letter-spacing:.6px">Bill</div><div class="d" style="left:370px;top:681px">Total Tax</div><div class="d" style="left:409px;top:700px">Bill</div>

<div class="l" style="left:123px;top:695px;width:99px;height:19px"></div>
<div class="d" style="left:123px;top:696px;text-decoration:underline">Tax Details</div>
<div class="a" style="left:111px;top:714px;width:131px;height:56px;background:#fdeef6;border:2.500px solid #ef3c87"></div>
<div class="o" style="left:113px;top:716px;width:36px;height:21px"></div>
<div class="l" style="left:152px;top:716px;width:14px;height:21px"></div>
<div class="o" style="left:170px;top:716px;width:64px;height:21px"></div>
<div class="d" style="left:122px;top:716px">Tax</div><div class="d" style="left:153px;top:716px;font-size:13px">%</div><div class="d" style="left:207px;top:716px">Tax</div>

<div class="a" style="left:269px;top:720px;width:214px;height:15px;background:#bbada0;overflow:hidden"><div class="d" style="left:0;top:-5px">line</div></div>
<div class="l" style="left:250px;top:734px;width:87px;height:21px"></div>
<div class="l" style="left:338px;top:735px;width:21px;height:22px"></div>
<div class="o" style="left:359px;top:735px;width:64px;height:19px"></div>
<div class="d" style="left:251px;top:735px;font-size:15.800px;line-height:20px">Net Amt :</div>
<div class="d" style="left:338px;top:736px;font:16px/18px 'DejaVu Sans',sans-serif">₹</div>
<div class="d" style="left:390px;top:733px;font-size:18px;line-height:20px">Bill</div>
<div class="a" style="left:269px;top:754px;width:214px;height:21px;background:#bbada0"></div>
<div class="d" style="left:270px;top:755px">line</div>
<div class="l" style="left:110px;top:774px;width:167px;height:20px"></div>
<div class="d" style="left:111px;top:775px">YOU HAVE SAVED:</div>
<div class="o" style="left:283px;top:774px;width:76px;height:21px;overflow:hidden"><div class="d" style="left:0;top:0;font-size:15px;letter-spacing:1px;white-space:normal;width:80px;line-height:17px;text-align:center">You Have Saved</div></div>
<div class="g" style="top:794px"></div><div class="d" style="left:109px;top:795px">line</div>
<div class="l" style="left:110px;top:814px;width:208px;height:21px"></div>
<div class="d" style="left:111px;top:815px">Payment Details</div>
<div class="o" style="left:329px;top:818px;width:77px;height:21px;overflow:hidden"><div class="mo" style="left:1px;top:1px">BillOffer</div></div>

<div class="l" style="left:114px;top:837px;width:107px;height:18px"></div>
<div class="l" style="left:114px;top:855px;width:166px;height:22px"></div>
<div class="l" style="left:114px;top:877px;width:168px;height:41px"></div>
<div class="l" style="left:114px;top:918px;width:150px;height:32px"></div>
<div class="l" style="left:114px;top:950px;width:201px;height:63px"></div>
<div class="l" style="left:287px;top:837px;width:28px;height:113px"></div>
<div class="l" style="left:110px;top:1013px;width:210px;height:22px"></div>
<div class="l" style="left:110px;top:1035px;width:119px;height:20px"></div>
<div class="o" style="left:320px;top:837px;width:77px;height:198px"></div>
<div class="o" style="left:233px;top:1034px;width:177px;height:21px"></div>

<div class="d" style="left:114px;top:838px">Cash Tendered</div><div class="d" style="left:114px;top:856px">Balance Amount</div><div class="d" style="left:114px;top:878px">Credit Card</div><div class="d" style="left:114px;top:898px">Coupon Amount</div><div class="d" style="left:114px;top:916px">Credit Sales</div><div class="d" style="left:114px;top:934px">Voucher Amount</div><div class="d" style="left:114px;top:951px;letter-spacing:-.1px">Third Par. Finance</div><div class="d" style="left:114px;top:972px">RRN Amount</div><div class="d" style="left:114px;top:994px">Loyalty Redemption</div><div class="d" style="left:110px;top:1015px">TOTAL LOYALTY POINT :</div><div class="d" style="left:110px;top:1035px">USER NAME :</div>
<div class="d" style="left:288px;top:838px">:</div><div class="d" style="left:288px;top:856px">:</div><div class="d" style="left:288px;top:878px">:</div><div class="d" style="left:288px;top:898px">:</div><div class="d" style="left:288px;top:916px">:</div><div class="d" style="left:288px;top:934px">:</div><div class="d" style="left:288px;top:972px">:</div><div class="d" style="left:288px;top:994px">:</div>
<div class="d tn" style="right:1523px;top:838px">Tender</div><div class="d tn" style="right:1523px;top:856px">Tendered</div><div class="d tn" style="right:1523px;top:878px">Tender</div><div class="d tn" style="right:1523px;top:898px">Tender</div><div class="d tn" style="right:1523px;top:916px">Tender</div><div class="d tn" style="right:1523px;top:934px">Tender</div><div class="d tn" style="right:1523px;top:951px">Tender</div><div class="d tn" style="right:1523px;top:972px">Tender</div><div class="d tn" style="right:1523px;top:994px">Tender</div><div class="d" style="right:1523px;top:1015px">Total</div>
<div class="d" style="left:233px;top:1035px">User Name</div>
<div class="o" style="left:129px;top:1059px;width:289px;height:21px"></div>
<div class="o" style="left:129px;top:1080px;width:286px;height:13px"></div>
<div class="d" style="left:130px;top:1060px">Shop Primary Bill Message</div>
<div class="a" style="left:132px;top:1079px;width:25px;height:10px;background:repeating-linear-gradient(90deg,#2a1a10 0 1.500px,transparent 1.500px 3px)"></div>
<div class="a" style="left:163px;top:1079px;width:57px;height:10px;background:repeating-linear-gradient(90deg,#2a1a10 0 2px,transparent 2px 3px,#2a1a10 3px 4px,transparent 4px 6px)"></div>
<div class="a" style="left:226px;top:1079px;width:23px;height:10px;background:repeating-linear-gradient(90deg,#2a1a10 0 1.500px,transparent 1.500px 3.500px)"></div>
<div class="a" style="left:257px;top:1079px;width:42px;height:10px;background:repeating-linear-gradient(90deg,#2a1a10 0 2px,transparent 2px 3.500px)"></div>

<!-- press F6 and dialog -->
<div class="a" style="left:815px;top:442px;width:300px;text-align:center;font:25.800px/32px 'Liberation Sans',sans-serif;color:#8b0a20;white-space:nowrap;letter-spacing:.1px">Press F6 button</div>
<div class="a" style="left:725px;top:498px;width:470px;height:201px;border:5px solid #8b0018"></div>
<div class="a" style="left:743px;top:523px;width:429px;height:153px;background:#fff;border:3px solid #f0f0f0;border-right:2px solid #8a8a8a;border-bottom:2px solid #8a8a8a"></div>
<div class="a" style="left:747px;top:527px;width:421px;height:30px;background:#333;color:#fff;text-align:center;font:bold 24px/30px 'Liberation Sans',sans-serif">Service User Login</div>
<div class="a" style="left:757px;top:566px;font:20px/23px 'Liberation Sans',sans-serif;color:#111;white-space:nowrap">User Name</div>
<div class="a" style="left:757px;top:604px;font:20px/23px 'Liberation Sans',sans-serif;color:#111;white-space:nowrap">Password</div>
<div class="a" style="left:879px;top:559px;width:289px;height:34px;background:#fff;border:1.500px solid #8a8a8a"></div>
<div class="a" style="left:879px;top:597px;width:289px;height:34px;background:#fff;border:1.500px solid #8a8a8a"></div>
<div class="a" style="left:882px;top:635px;width:136px;height:33px;background:#f0f0f0;border:1px solid #f8f8f8;border-right:2px solid #888;border-bottom:2px solid #888;text-align:center;font:16.500px/32px 'Liberation Sans',sans-serif;color:#111"><u>L</u>ogin</div>
<div class="a" style="left:1029px;top:635px;width:137px;height:33px;background:#f0f0f0;border:1px solid #f8f8f8;border-right:2px solid #888;border-bottom:2px solid #888;text-align:center;font:16.500px/32px 'Liberation Sans',sans-serif;color:#111"><u>C</u>ancel</div>

<!-- right panel -->
<div class="a" style="left:1636px;top:133px;width:277px;height:50px;background:#fff"></div>
<div class="a" style="left:1638px;top:141px;width:275px;height:743px;background:#fff;border:1.500px solid #777"></div>
<div class="a" style="left:1643px;top:146px;width:267px;height:30px;background:#333;color:#fff;text-align:center;font:22.400px/29px 'Liberation Sans',sans-serif;white-space:nowrap">Search by Field Caption</div>
<div class="a" style="left:1643px;top:180px;width:238px;height:23px;border:1.500px solid #aaa;border-right:0;border-bottom:1px solid #ddd;background:#fff;font:bold 14px/22px 'DejaVu Sans',sans-serif;color:#111;padding-left:4px;white-space:nowrap;letter-spacing:.2px">View Header Field</div>
<div class="a" style="left:1859px;top:180px;width:21px;height:23px;background:#e6e6e6;border:1px solid #ccc;border-right:2px solid #777;border-bottom:2px solid #777"></div>
<svg class="a" style="left:1864px;top:187px" width="12" height="9"><path d="M1 1h10L6 7z" fill="#111"/></svg>
<svg class="a" style="left:1887px;top:182px" width="20" height="20" viewBox="0 0 20 20"><path d="M15 13.500a6.500 6.500 0 1 1 0-7.500" fill="none" stroke="#333" stroke-width="3"/><path d="M17 2v7h-7z" fill="#333"/></svg>
<div class="a" style="left:1642px;top:207px;width:239px;height:26px;background:#fff;border:1.500px solid #777"></div>
<svg class="a" style="left:1885px;top:208px" width="24" height="24" viewBox="0 0 24 24"><circle cx="10" cy="10" r="6.500" fill="#fafafa" stroke="#ccc" stroke-width="1.600"/><path d="M15 15l7 6" stroke="#c4c4c4" stroke-width="3"/></svg>
<div class="a" style="left:1642px;top:234px;width:268px;height:258px;background:#fff;border:1.500px solid #777"></div>
<div class="a" style="left:1889px;top:236px;width:19px;height:254px;background:#f0f0f0"></div>
<div class="a" style="left:1889px;top:257px;width:19px;height:21px;background:#cdcdcd"></div>
<svg class="a" style="left:1892px;top:241px" width="14" height="10"><path d="M2 8l5-5 5 5" fill="none" stroke="#555" stroke-width="2"/></svg>
<svg class="a" style="left:1892px;top:476px" width="14" height="10"><path d="M2 2l5 5 5-5" fill="none" stroke="#555" stroke-width="2"/></svg>
<div class="li" style="top:236px">Additional Tax Percentage</div>
<div class="li" style="top:258px">Additional Vat Percentage</div>
<div class="li" style="top:279px">Advance Amount</div>
<div class="li" style="top:300px">Agent Name</div>
<div class="li" style="top:322px">Amout In Words</div>
<div class="li" style="top:343px">Bill Caption</div>
<div class="li" style="top:364px">Bill Cenvat Amount</div>
<div class="li" style="top:385px">Bill Date</div>
<div class="li" style="top:407px">Bill Delivery Charge</div>
<div class="li" style="top:428px">Bill Discount Amount</div>
<div class="li" style="top:449px">Bill Discount Percentage 1</div>
<div class="li" style="top:470px;letter-spacing:.1px">Bill Discount Percentage 2</div>
<div class="a" style="left:1642px;top:538px;width:246px;height:126px;background:#fff;border:1.500px solid #777"></div>
<div class="a" style="left:1889px;top:538px;width:20px;height:126px;background:#f0f0f0"></div>
<svg class="a" style="left:1892px;top:544px" width="14" height="10"><path d="M2 8l5-5 5 5" fill="none" stroke="#ccc" stroke-width="2"/></svg>
<svg class="a" style="left:1892px;top:648px" width="14" height="10"><path d="M2 2l5 5 5-5" fill="none" stroke="#ccc" stroke-width="2"/></svg>
<div class="a" style="left:1642px;top:670px;width:267px;height:210px;background:#fff;border:1.500px solid #777"></div>

<!-- status bar -->
<div class="a" style="left:0;top:1116px;width:1913px;height:29px;background:#c9d8ee"></div>
<div class="st" style="left:-2px;width:270px"></div>
<div class="sl" style="left:270px">X:-</div>
<div class="st" style="left:298px;width:75px">0</div>
<div class="sl" style="left:376px">Y:-</div>
<div class="st" style="left:407px;width:75px">0</div>
<div class="st" style="left:485px;width:440px">Page Header section [80x65(65)]</div>
<div class="sl" style="left:928px">Width</div>
<div class="st" style="left:973px;width:110px">79.99244</div>
<div class="sl" style="left:1085px">Height</div>
<div class="st" style="left:1138px;width:109px">3276.003</div>

</div></body></html>
